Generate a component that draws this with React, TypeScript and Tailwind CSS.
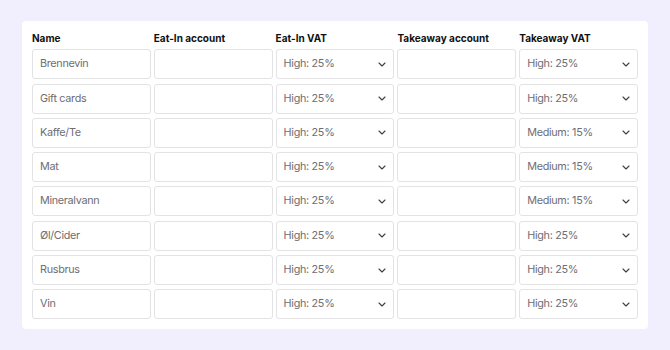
import React from "react";

const rows: [string, string, string][] = [
  ["Brennevin", "High: 25%", "High: 25%"],
  ["Gift cards", "High: 25%", "High: 25%"],
  ["Kaffe/Te", "High: 25%", "Medium: 15%"],
  ["Mat", "High: 25%", "Medium: 15%"],
  ["Mineralvann", "High: 25%", "Medium: 15%"],
  ["Øl/Cider", "High: 25%", "High: 25%"],
  ["Rusbrus", "High: 25%", "High: 25%"],
  ["Vin", "High: 25%", "High: 25%"],
];

function Chevron() {
  return (
    <svg width="8" height="5" viewBox="0 0 8 5" fill="none">
      <path d="M1 1l3 3 3-3" stroke="#3f3f46" strokeWidth="1.1" strokeLinecap="round" strokeLinejoin="round" />
    </svg>
  );
}

function Cell({ text }: { text?: string }) {
  return (
    <div className="h-[30px] rounded-[3px] border border-[#e3e3e6] bg-white flex items-center px-[7px] text-[10.8px] tracking-[-0.3px] text-[#6e6e73]">
      {text}
    </div>
  );
}

function Select({ text }: { text: string }) {
  return (
    <div className="h-[30px] rounded-[3px] border border-[#e3e3e6] bg-white flex items-center justify-between pl-[7px] pr-[7px] text-[10.8px] tracking-[-0.3px] text-[#6e6e73]">
      <span>{text}</span>
      <Chevron />
    </div>
  );
}

export default function App() {
  return (
    <div
      className="w-[670px] h-[350px] bg-[#f1eefd] pt-[21px] pl-[22px]"
      style={{ fontFamily: "Inter, 'Liberation Sans', sans-serif" }}
    >
      <div className="w-[626px] bg-white rounded-[4px] p-[10px]">
        <div className="grid grid-cols-5 gap-x-[3px] gap-y-[4.3px]">
          {["Name", "Eat-In account", "Eat-In VAT", "Takeaway account", "Takeaway VAT"].map((h) => (
            <div key={h} className="h-[14px] leading-[14px] text-[10px] font-bold text-[#111]">
              {h}
            </div>
          ))}
          {rows.map(([name, eat, take]) => (
            <React.Fragment key={name}>
              <Cell text={name} />
              <Cell />
              <Select text={eat} />
              <Cell />
              <Select text={take} />
            </React.Fragment>
          ))}
        </div>
      </div>
    </div>
  );
}
